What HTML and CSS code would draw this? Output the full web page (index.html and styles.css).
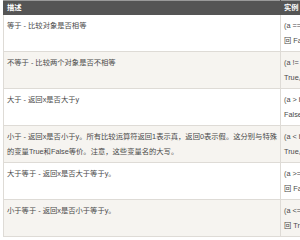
FILE: index.html
```html
<!DOCTYPE html>
<html lang="zh">
<head>
<meta charset="utf-8">
<link rel="stylesheet" href="styles.css">
</head>
<body>
<div class="wrap">
<table class="reference">
  <thead>
    <tr><th class="h-desc">描述</th><th class="h-ex">实例</th></tr>
  </thead>
  <tbody>
    <tr><td>等于 - 比较对象是否相等</td><td>(a == b) 返<br>回 False。</td></tr>
    <tr><td>不等于 - 比较两个对象是否不相等</td><td>(a != b) 返回<br>True。</td></tr>
    <tr><td>大于 - 返回x是否大于y</td><td>(a &gt; b) 返回<br>False。</td></tr>
    <tr><td>小于 - 返回x是否小于y。所有比较运算符返回1表示真，返回0表示假。这分别与特殊<br>的变量True和False等价。注意，这些变量名的大写。</td><td>(a &lt; b) 返回<br>True。</td></tr>
    <tr><td>大于等于 - 返回x是否大于等于y。</td><td>(a &gt;= b) 返<br>回 False。</td></tr>
    <tr><td>小于等于 - 返回x是否小于等于y。</td><td>(a &lt;= b) 返<br>回 True。</td></tr>
  </tbody>
</table>
</div>
</body>
</html>
```
FILE: styles.css
```css
html, body {
  margin: 0;
  padding: 0;
  background: #fff;
}
.wrap {
  width: 300px;
  height: 240px;
  overflow: hidden;
}
.reference {
  margin-left: 3px;
  border-collapse: collapse;
  font-family: "Liberation Sans", "Noto Sans CJK SC", sans-serif;
  font-size: 7.3px;
  color: #4a4a4a;
}
.reference th {
  background: #555;
  color: #fff;
  font-weight: bold;
  text-align: left;
  line-height: 13px;
  padding: 0 3px;
  border: 1px solid #555;
  border-top-color: #9a9a9a;
  white-space: nowrap;
}
.h-desc { width: 273px; }
.h-ex { width: 60px; }
.reference td {
  line-height: 15px;
  padding: 3px;
  border: 1px solid #dedbd6;
  vertical-align: top;
  white-space: nowrap;
}
.reference tbody tr:nth-child(even) td {
  background: #f6f4f0;
}
```
